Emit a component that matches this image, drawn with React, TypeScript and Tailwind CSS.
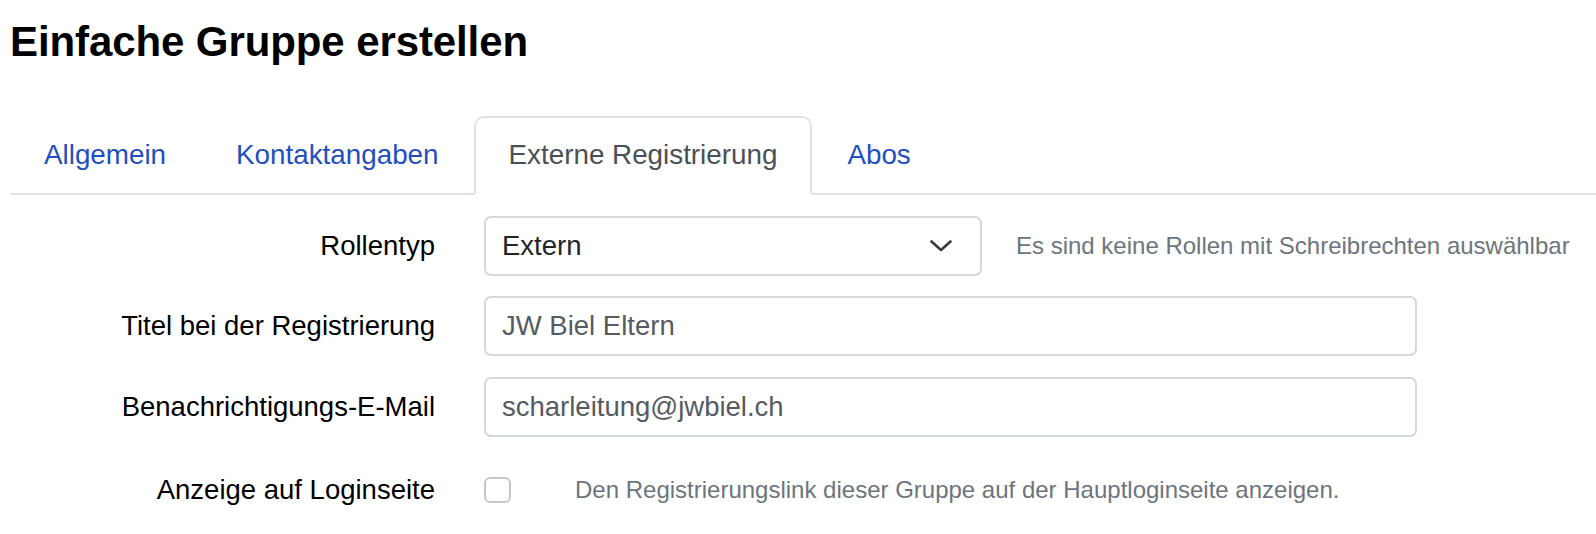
import React from 'react';

const TABS = ['Allgemein', 'Kontaktangaben', 'Externe Registrierung', 'Abos'];
const ACTIVE_TAB = 'Externe Registrierung';

const Chevron = () => (
  <svg width="22" height="12" viewBox="0 0 22 12" fill="none">
    <polyline
      points="1.5,1.5 11,10 20.5,1.5"
      stroke="#343a40"
      strokeWidth="2.6"
      strokeLinecap="round"
      strokeLinejoin="round"
    />
  </svg>
);

const Row = ({ label, children, className = '' }: { label: string; children: React.ReactNode; className?: string }) => (
  <div className={`flex items-center h-[60px] ${className}`}>
    <label className="w-[425px] shrink-0 text-right text-[27.5px] leading-[1.5] text-black">{label}</label>
    <div className="ml-[49px] flex items-center">{children}</div>
  </div>
);

export default function App() {
  return (
    <div
      className="w-full min-h-[534px] bg-white pl-[10px] overflow-hidden"
      style={{ fontFamily: '"Liberation Sans", Arial, Helvetica, sans-serif' }}
    >
      <h1 className="pt-[17px] text-[42px] leading-[1.2] font-bold text-black tracking-[-0.1px]">Einfache Gruppe erstellen</h1>

      {/* Tabs */}
      <nav className="mt-[49px] flex border-b-2 border-[#dee2e6]">
        {TABS.map((tab, i) => {
          const isActive = tab === ACTIVE_TAB;
          return (
            <div
              key={tab}
              className={`-mb-[2px] ${i === 0 ? 'pl-[32px] pr-[33px]' : 'px-[33px]'} pt-[16px] pb-[17px] border-2 rounded-t-[10px] text-[27.8px] leading-[1.5] whitespace-nowrap ${
                isActive
                  ? 'border-[#dee2e6] border-b-white bg-white text-[#495057]'
                  : 'border-transparent text-[#1f4fbf]'
              }`}
            >
              {tab}
            </div>
          );
        })}
      </nav>

      {/* Form */}
      <div className="mt-[21px] flex flex-col gap-[20px]">
        <Row label="Rollentyp">
          <div className="w-[498px] h-[60px] border-2 border-[#d3d8dd] rounded-[7px] flex items-center justify-between pl-[16px] pr-[28px]">
            <span className="text-[27.5px] leading-[1.5] text-[#212529]">Extern</span>
            <Chevron />
          </div>
          <span className="ml-[34px] text-[24px] leading-[1.5] text-[#6c757d] whitespace-nowrap">
            Es sind keine Rollen mit Schreibrechten auswählbar
          </span>
        </Row>

        <Row label="Titel bei der Registrierung">
          <div className="w-[933px] h-[60px] border-2 border-[#d3d8dd] rounded-[7px] flex items-center pl-[16px]">
            <span className="text-[27.5px] leading-[1.5] text-[#555b61]">JW Biel Eltern</span>
          </div>
        </Row>

        <Row label="Benachrichtigungs-E-Mail" className="mt-[1px]">
          <div className="w-[933px] h-[60px] border-2 border-[#d3d8dd] rounded-[7px] flex items-center pl-[16px]">
            <span className="text-[27.5px] leading-[1.5] text-[#555b61]">scharleitung@jwbiel.ch</span>
          </div>
        </Row>

        <Row label="Anzeige auf Loginseite" className="mt-[3px]">
          <div className="w-[27px] h-[26px] border-2 border-[#c4c7ca] rounded-[6px] bg-white" />
          <span className="ml-[64px] text-[24px] leading-[1.5] text-[#6c757d] whitespace-nowrap">
            Den Registrierungslink dieser Gruppe auf der Hauptloginseite anzeigen.
          </span>
        </Row>
      </div>
    </div>
  );
}
